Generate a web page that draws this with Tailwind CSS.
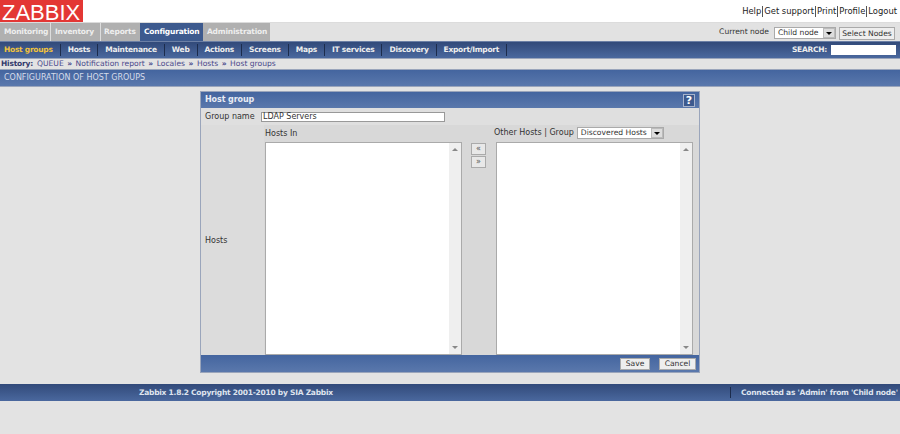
<!DOCTYPE html>
<html>
<head>
<meta charset="utf-8">
<title>Zabbix - Host groups</title>
<script src="https://cdn.jsdelivr.net/npm/@tailwindcss/browser@4"></script>
</head>
<body class="bg-[#e3e3e3] h-[434px] w-[900px] overflow-hidden font-['DejaVu_Sans',sans-serif] text-[8px] text-[#333]">
	<!-- Top: logo and user links -->
	<div class="h-[22px] bg-white flex justify-between">
		<div class="w-[83px] h-[22px] bg-[#e33734] text-white text-[22px] leading-[25px] pl-[2px] font-['Liberation_Sans',sans-serif]">ZABBIX</div>
		<div class="flex items-start pt-[6px] pr-[3px] text-[8.4px] leading-[11px] text-[#222]">
			<span class="pr-[1px] border-r border-[#555]">Help</span>
			<span class="px-[1px] border-r border-[#555]">Get support</span>
			<span class="px-[1px] border-r border-[#555]">Print</span>
			<span class="px-[1px] border-r border-[#555]">Profile</span>
			<span class="pl-[1px]">Logout</span>
		</div>
	</div>
	<!-- Main tabs -->
	<div class="h-[19px] bg-[#e2e2e2] flex justify-between border-t border-[#dcdcdc]">
		<div class="flex font-bold text-[7.5px] tracking-[-0.2px] leading-[18px] text-[#eee]">
			<div class="w-[51px] pl-[4px] bg-[#b0b0b0] border-r border-[#ddd]">Monitoring</div>
			<div class="w-[50px] pl-[4px] bg-[#b0b0b0] border-r border-[#ddd]">Inventory</div>
			<div class="w-[39px] pl-[3px] bg-[#b0b0b0]">Reports</div>
			<div class="w-[63px] pl-[4px] bg-[#3d5a8e] text-white">Configuration</div>
			<div class="w-[67px] pl-[4px] bg-[#b0b0b0]">Administration</div>
		</div>
		<div class="flex items-start pt-[4px] pr-[5px] text-[7.6px]">
			<span class="mr-[5px] leading-[10px]">Current node</span>
			<div class="w-[62px] h-[12px] bg-white border border-[#aaa] flex justify-between items-center pl-[3px] leading-[10px] mr-[3px]">
				Child node
				<span class="w-[12px] h-[10px] bg-[#ddd] border border-[#bbb] flex items-center justify-center"><span class="w-0 h-0 border-x-[3px] border-x-transparent border-t-[3px] border-t-black"></span></span>
			</div>
			<div class="w-[56px] h-[13px] bg-[#eee] border border-[#aaa] text-center leading-[12px]">Select Nodes</div>
		</div>
	</div>
	<!-- Sub navigation -->
	<div class="h-[18px] bg-gradient-to-b from-[#324a7a] to-[#4a689e] border-t border-[#6b7fa5] border-b border-b-[#9aa5bb] flex justify-between items-center font-bold text-[7.5px] tracking-[-0.26px] text-[#eee]">
		<div class="flex items-center pl-[4px]">
			<span class="text-[#f0c23c] pr-[7px] border-r border-[#1c2c4c]">Host groups</span>
			<span class="px-[7px] border-r border-[#1c2c4c]">Hosts</span>
			<span class="px-[7px] border-r border-[#1c2c4c]">Maintenance</span>
			<span class="px-[7px] border-r border-[#1c2c4c]">Web</span>
			<span class="px-[7px] border-r border-[#1c2c4c]">Actions</span>
			<span class="px-[7px] border-r border-[#1c2c4c]">Screens</span>
			<span class="px-[7px] border-r border-[#1c2c4c]">Maps</span>
			<span class="px-[7px] border-r border-[#1c2c4c]">IT services</span>
			<span class="px-[7px] border-r border-[#1c2c4c]">Discovery</span>
			<span class="px-[7px] border-r border-[#1c2c4c]">Export/Import</span>
		</div>
		<div class="flex items-center pr-[4px]">
			<span class="mr-[4px]">SEARCH:</span>
			<div class="w-[65px] h-[10px] bg-white"></div>
		</div>
	</div>
	<!-- History -->
	<div class="h-[10px] leading-[10px] pl-[1px] text-[7.6px] text-[#4a4a8c] whitespace-nowrap flex">
		<b class="text-[#333a6c] w-[36px] text-[7.5px] tracking-[-0.2px]">History:</b>
		<span>QUEUE</span>
		<b class="px-[3.5px]">»</b>
		<span>Notification report</span>
		<b class="px-[3.5px]">»</b>
		<span>Locales</span>
		<b class="px-[3.5px]">»</b>
		<span>Hosts</span>
		<b class="px-[3.5px]">»</b>
		<span>Host groups</span>
	</div>
	<!-- Page title -->
	<div class="h-[18px] bg-gradient-to-b from-[#44659f] to-[#5a78ac] border-y border-[#9aa5bb] pl-[4px] leading-[16px] text-[#d6dcea]">CONFIGURATION OF HOST GROUPS</div>

	<!-- Host group form -->
	<div class="w-[500px] h-[282px] mt-[4px] ml-[200px] border border-[#9aa5bb] bg-[#d8d8d8] flex flex-col">
		<div class="h-[16px] bg-gradient-to-b from-[#44659f] to-[#5a78ac] flex justify-between items-center pl-[4px] pr-[4px] font-bold text-[8px] tracking-[-0.1px] text-[#e8ecf4]">
			Host group
			<span class="w-[12px] h-[13px] bg-[#3d5a8e] border border-[#a8b4cc] text-white text-[11px] leading-[11px] text-center">?</span>
		</div>
		<div class="h-[17px] bg-[#dfdfdf] flex items-center pl-[4px]">
			<span class="w-[56px]">Group name</span>
			<div class="w-[184px] h-[10px] bg-white border border-[#999] leading-[8px] pl-[1px]">LDAP Servers</div>
		</div>
		<div class="flex-1 flex min-h-0">
			<div class="w-[63px] bg-[#dcdcdc] pl-[4px] flex items-center pt-[2px]">Hosts</div>
			<div class="w-[198px] pl-[1px] pt-[2px]">
				<div class="h-[15px] leading-[14px]">Hosts In</div>
				<div class="w-[197px] h-[213px] bg-white border border-[#aaa] flex justify-end">
					<div class="w-[12px] bg-[#efefef] flex flex-col justify-between items-center py-[5px]">
						<span class="w-0 h-0 border-x-[3px] border-x-transparent border-b-[3px] border-b-[#888]"></span>
						<span class="w-0 h-0 border-x-[3px] border-x-transparent border-t-[3px] border-t-[#888]"></span>
					</div>
				</div>
			</div>
			<div class="w-[32px] flex flex-col items-center pl-[1px] pt-[18px] gap-[1px] bg-[#d8d8d8]">
				<div class="w-[15px] h-[12px] bg-[#e8e8e8] border border-[#aaa] text-center leading-[9px] text-[#555]">«</div>
				<div class="w-[15px] h-[12px] bg-[#e8e8e8] border border-[#aaa] text-center leading-[9px] text-[#555]">»</div>
			</div>
			<div class="w-[204px] pt-[2px]">
				<div class="h-[15px] flex items-start whitespace-nowrap leading-[12px]">
					Other Hosts | Group
					<div class="ml-[3px] w-[87px] h-[12px] bg-white border border-[#aaa] flex justify-between items-center pl-[3px] leading-[10px] text-[7.6px]">
						Discovered Hosts
						<span class="w-[12px] h-[10px] bg-[#ddd] border border-[#bbb] flex items-center justify-center"><span class="w-0 h-0 border-x-[3px] border-x-transparent border-t-[3px] border-t-black"></span></span>
					</div>
				</div>
				<div class="ml-[2px] w-[197px] h-[213px] bg-white border border-[#aaa] flex justify-end">
					<div class="w-[12px] bg-[#efefef] flex flex-col justify-between items-center py-[5px]">
						<span class="w-0 h-0 border-x-[3px] border-x-transparent border-b-[3px] border-b-[#888]"></span>
						<span class="w-0 h-0 border-x-[3px] border-x-transparent border-t-[3px] border-t-[#888]"></span>
					</div>
				</div>
			</div>
		</div>
		<div class="h-[17px] bg-gradient-to-b from-[#44659f] to-[#5a78ac] flex justify-end items-center gap-[9px] pr-[3px] text-[7.6px]">
			<div class="w-[30px] h-[12px] bg-[#eee] border border-[#aaa] text-center leading-[10px]">Save</div>
			<div class="w-[37px] h-[12px] bg-[#eee] border border-[#aaa] text-center leading-[10px]">Cancel</div>
		</div>
	</div>

	<!-- Page footer -->
	<div class="h-[17px] mt-[11px] bg-gradient-to-b from-[#324a7a] to-[#4a689e] flex items-center font-bold text-[7.5px] tracking-[-0.24px] text-[#dfe4ee]">
		<div class="w-[730px] shrink-0 pl-[139px]">Zabbix 1.8.2 Copyright 2001-2010 by SIA Zabbix</div>
		<div class="border-l border-[#1c2c4c] pl-[10px] whitespace-nowrap">Connected as 'Admin' from 'Child node'</div>
	</div>
</body>
</html>
